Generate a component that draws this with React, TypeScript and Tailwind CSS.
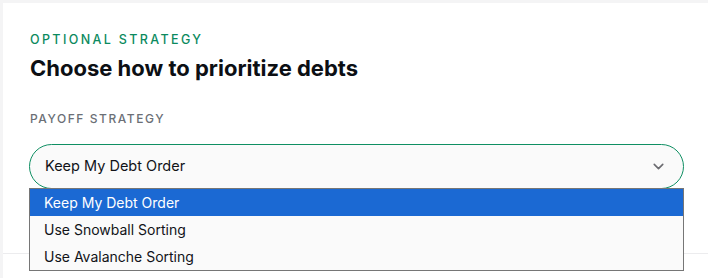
import { ChevronDown } from 'lucide-react';

const options = ['Keep My Debt Order', 'Use Snowball Sorting', 'Use Avalanche Sorting'];

export default function App() {
  const selected = 0;

  return (
    <div className="h-[278px] w-[708px] overflow-hidden bg-[#f4f4f5] pl-[3px] pt-[3px] font-['Inter',sans-serif]">
      <div className="relative h-full w-full bg-white">
        <div className="px-[27px] pt-[28px]">
          <p className="text-[12.5px] font-medium uppercase tracking-[0.19em] text-[#0b8a5e]">Optional strategy</p>
          <h2 className="mt-[4px] text-[22px] font-bold leading-[28px] text-[#0c0f14]">
            Choose how to prioritize debts
          </h2>
          <p className="mt-[28px] text-[12px] font-medium uppercase tracking-[0.13em] text-[#6b6f76]">Payoff strategy</p>
          <div className="mt-[16px] ml-[-1px] flex h-[45px] w-[655px] items-center justify-between rounded-full border border-[#0f8f63] bg-[#fafafa] pl-[15px] pr-[16px]">
            <span className="text-[14.5px] text-[#111318]">{options[selected]}</span>
            <ChevronDown className="h-[17px] w-[17px] text-[#6b6b70]" strokeWidth={2.25} />
          </div>
        </div>
        <div className="mt-[64px] h-px w-full bg-[#ececee]" />
        <div className="absolute left-[26px] top-[185px] w-[655px] border border-[#767676] bg-[#fafafa]">
          {options.map((opt, i) => (
            <div
              key={opt}
              className={
                i === selected
                  ? 'flex h-[27px] items-center bg-[#1b69d3] pl-[14px] text-[14px] text-white'
                  : 'flex h-[27px] items-center pl-[14px] text-[14px] text-[#111318]'
              }
            >
              {opt}
            </div>
          ))}
        </div>
      </div>
    </div>
  );
}
